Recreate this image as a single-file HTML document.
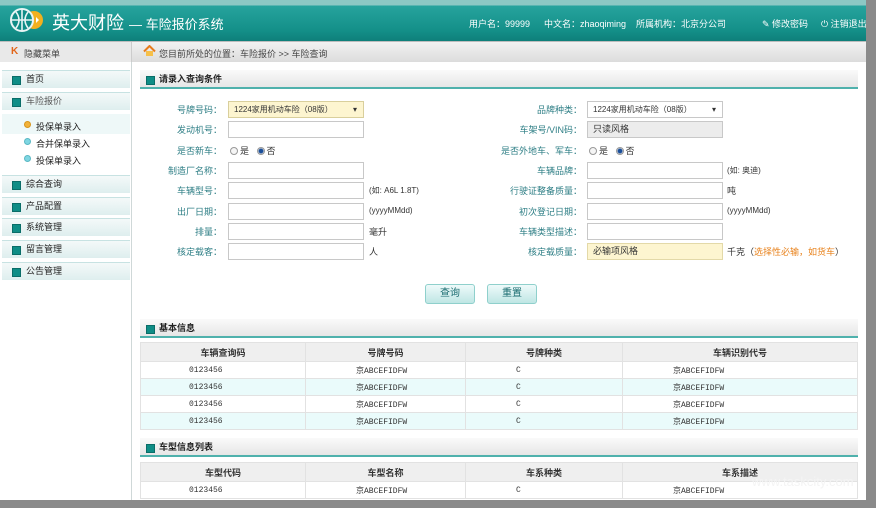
<!DOCTYPE html>
<html><head><meta charset="utf-8"><style>
*{margin:0;padding:0;box-sizing:border-box}
body{width:876px;height:508px;overflow:hidden;background:#fff;font-family:"Liberation Sans","Noto Sans CJK SC",sans-serif;font-size:9px;color:#333;position:relative;white-space:nowrap}
.abs{position:absolute}
#hd{left:0;top:0;width:866px;height:41px;background:linear-gradient(180deg,#8cc8c4 0,#8cc8c4 5px,#26a39d 6px,#149089 30px,#0e7f7a 41px)}
#hd .t{left:52px;top:9px;color:#fff;font-size:18px}
#hd .t small{font-size:13px}
#hd .u{top:17px;color:#fff;font-size:9px}
#sub{left:0;top:41px;width:866px;height:21px;background:linear-gradient(#f2f2f2,#dcdcdc);border-top:1px solid #bdbdbd}
#side{left:0;top:62px;width:132px;height:438px;background:#fff;border-right:1px solid #cfd8d8}
.mi{position:absolute;left:2px;width:128px;height:18px;background:linear-gradient(#f4f9f9,#deeeee);border-top:1px solid #c7e2e2;font-size:9px;line-height:17px;padding-left:24px;color:#222}
.mi:before{content:"";position:absolute;left:10px;top:5px;width:7px;height:7px;background:#0f8d86;border:1px solid #0a6d68}
.sm{position:absolute;left:24px;font-size:9px;color:#222}
.dot{position:absolute;left:24px;width:7px;height:7px;border-radius:50%;background:#7fd6e2;border:1px solid #5ab8c4}
.ph{position:absolute;left:140px;width:718px;height:19px;background:linear-gradient(#fafafa,#e6e6e6);border-bottom:2px solid #4fb1ac;font-weight:bold;font-size:9px;line-height:18px;padding-left:19px;color:#222}
.ph:before{content:"";position:absolute;left:6px;top:6px;width:7px;height:7px;background:#0f8d86;border:1px solid #0a6d68}
.lb{position:absolute;color:#2f7f86;text-align:right;width:140px;font-size:9px}
.in{position:absolute;width:136px;height:17px;border:1px solid #c8c8c8;background:#fff;font-size:8px;line-height:15px;padding-left:5px}
.nt{position:absolute;font-size:8px;color:#333}
table{position:absolute;left:140px;width:718px;border-collapse:collapse;font-size:8px;font-family:"Liberation Mono","Noto Sans CJK SC",monospace}
td,th{border:1px solid #e2e2e2;height:17px}
th{background:#efefef;font-weight:bold;height:19px;font-size:9px;font-family:"Liberation Sans","Noto Sans CJK SC",sans-serif}
td:nth-child(1){padding-left:48px}
td:nth-child(n+2){padding-left:50px}
tr.a td{background:#eafbfb}
.btn{position:absolute;top:284px;width:50px;height:20px;border:1px solid #8fd0cc;border-radius:3px;background:linear-gradient(#eefafa,#bfe6e4);color:#1a6c70;font-size:10px;text-align:center;line-height:18px}
.r{display:inline-block;width:8px;height:8px;border-radius:50%;border:1px solid #999;vertical-align:-1px;margin-right:2px;background:#f5f5f5}
.r.on{background:radial-gradient(#1b4f9a 2px,#eee 3px)}
</style></head><body>
<div id="hd" class="abs">
<svg class="abs" style="left:8px;top:6px" width="38" height="28" viewBox="0 0 38 28"><circle cx="26" cy="14" r="9" fill="#f2b01e"/><circle cx="14" cy="14" r="11" fill="#0f8c86" stroke="#e8f4f4" stroke-width="2"/><path d="M4 14h20M14 3v22M8 6q6 8 0 16M20 6q-6 8 0 16" stroke="#e8f4f4" fill="none" stroke-width="1.6"/><path d="M28 11l3 3-3 3z" fill="#fff"/></svg>
<div class="abs t">英大财险 <small>— 车险报价系统</small></div>
<div class="abs u" style="left:469px">用户名：99999</div>
<div class="abs u" style="left:544px">中文名：zhaoqiming</div>
<div class="abs u" style="left:636px">所属机构：北京分公司</div>
<div class="abs u" style="left:762px">✎ 修改密码</div>
<div class="abs u" style="left:821px">⏻ 注销退出</div>
</div>
<div class="abs" style="left:866px;top:0;width:10px;height:508px;background:#8a8a8a"></div>
<div class="abs" style="left:0;top:500px;width:876px;height:8px;background:#8a8a8a"></div>
<div id="sub" class="abs">
<div class="abs" style="left:0;top:0;width:132px;height:20px;background:#e9e9e9;border-right:1px solid #ccc"></div>
<div class="abs" style="left:11px;top:4px;color:#e2661a;font-weight:bold;font-size:10px">K</div>
<div class="abs" style="left:24px;top:5px;color:#444">隐藏菜单</div>
<svg class="abs" style="left:143px;top:3px" width="13" height="12" viewBox="0 0 13 12"><path d="M1 6.5L6.5 1 12 6.5" stroke="#e87b1c" stroke-width="2" fill="none"/><path d="M3 6v5h7V6" fill="#f6c04a"/></svg>
<div class="abs" style="left:159px;top:5px;color:#444">您目前所处的位置：车险报价 &gt;&gt; 车险查询</div>
</div>
<div id="side" class="abs">
<div class="mi" style="top:8px">首页</div>
<div class="mi" style="top:30px;color:#555">车险报价</div>
<div class="abs" style="left:2px;top:52px;width:128px;height:20px;background:#eef8f8"></div>
<div class="dot" style="top:59px;background:#f2b23a;border-color:#d8951c"></div><div class="sm" style="top:58px;left:36px">投保单录入</div>
<div class="dot" style="top:76px"></div><div class="sm" style="top:75px;left:36px">合并保单录入</div>
<div class="dot" style="top:93px"></div><div class="sm" style="top:92px;left:36px">投保单录入</div>
<div class="mi" style="top:113px">综合查询</div>
<div class="mi" style="top:135px">产品配置</div>
<div class="mi" style="top:156px">系统管理</div>
<div class="mi" style="top:178px">留言管理</div>
<div class="mi" style="top:200px">公告管理</div>
</div>
<div class="ph" style="top:70px">请录入查询条件</div>
<div class="lb" style="left:82px;top:103px">号牌号码：</div><div class="in" style="left:228px;top:101px;background:#fdf5d0;border-color:#d9cf9c">1224家用机动车险（08版）<span style="position:absolute;right:6px">▾</span></div>
<div class="lb" style="left:82px;top:123px">发动机号：</div><div class="in" style="left:228px;top:121px"></div>
<div class="lb" style="left:82px;top:144px">是否新车：</div><div class="nt" style="left:230px;top:144px;font-size:9px"><span class="r"></span>是 &nbsp;&nbsp;<span class="r on"></span>否</div>
<div class="lb" style="left:82px;top:164px">制造厂名称：</div><div class="in" style="left:228px;top:162px"></div>
<div class="lb" style="left:82px;top:184px">车辆型号：</div><div class="in" style="left:228px;top:182px"></div><div class="nt" style="left:369px;top:185px">(如: A6L 1.8T)</div>
<div class="lb" style="left:82px;top:205px">出厂日期：</div><div class="in" style="left:228px;top:203px"></div><div class="nt" style="left:369px;top:206px">(yyyyMMdd)</div>
<div class="lb" style="left:82px;top:225px">排量：</div><div class="in" style="left:228px;top:223px"></div><div class="nt" style="left:369px;top:225px;font-size:9px">毫升</div>
<div class="lb" style="left:82px;top:245px">核定载客：</div><div class="in" style="left:228px;top:243px"></div><div class="nt" style="left:369px;top:245px;font-size:9px">人</div>
<div class="lb" style="left:442px;top:103px">品牌种类：</div><div class="in" style="left:587px;top:101px">1224家用机动车险（08版）<span style="position:absolute;right:6px">▾</span></div>
<div class="lb" style="left:442px;top:123px">车架号/VIN码：</div><div class="in" style="left:587px;top:121px;background:#ececec;font-size:9px">只读风格</div>
<div class="lb" style="left:442px;top:144px">是否外地车、军车：</div><div class="nt" style="left:589px;top:144px;font-size:9px"><span class="r"></span>是 &nbsp;&nbsp;<span class="r on"></span>否</div>
<div class="lb" style="left:442px;top:164px">车辆品牌：</div><div class="in" style="left:587px;top:162px"></div><div class="nt" style="left:727px;top:165px">(如: 奥迪)</div>
<div class="lb" style="left:442px;top:184px">行驶证整备质量：</div><div class="in" style="left:587px;top:182px"></div><div class="nt" style="left:727px;top:184px;font-size:9px">吨</div>
<div class="lb" style="left:442px;top:205px">初次登记日期：</div><div class="in" style="left:587px;top:203px"></div><div class="nt" style="left:727px;top:206px">(yyyyMMdd)</div>
<div class="lb" style="left:442px;top:225px">车辆类型描述：</div><div class="in" style="left:587px;top:223px"></div>
<div class="lb" style="left:442px;top:245px">核定载质量：</div><div class="in" style="left:587px;top:243px;background:#fdf5d0;border-color:#e3d9a8;font-size:9px">必输项风格</div><div class="nt" style="left:727px;top:245px;font-size:9px">千克（<span style="color:#e8821c">选择性必输，如货车</span>）</div>
<div class="btn" style="left:425px">查询</div>
<div class="btn" style="left:487px">重置</div>
<div class="ph" style="top:319px">基本信息</div>
<table style="top:342px">
<tr><th style="width:165px">车辆查询码</th><th style="width:160px">号牌号码</th><th style="width:157px">号牌种类</th><th>车辆识别代号</th></tr>
<tr><td>0123456</td><td>京ABCEFIDFW</td><td>C</td><td>京ABCEFIDFW</td></tr>
<tr class="a"><td>0123456</td><td>京ABCEFIDFW</td><td>C</td><td>京ABCEFIDFW</td></tr>
<tr><td>0123456</td><td>京ABCEFIDFW</td><td>C</td><td>京ABCEFIDFW</td></tr>
<tr class="a"><td>0123456</td><td>京ABCEFIDFW</td><td>C</td><td>京ABCEFIDFW</td></tr>
</table>
<div class="ph" style="top:438px">车型信息列表</div>
<table style="top:462px">
<tr><th style="width:165px">车型代码</th><th style="width:160px">车型名称</th><th style="width:157px">车系种类</th><th>车系描述</th></tr>
<tr><td>0123456</td><td>京ABCEFIDFW</td><td>C</td><td>京ABCEFIDFW</td></tr>
</table>
<div class="abs" style="left:752px;top:474px;color:#f4f4f4;font-size:13px">www.taskcity.com</div>
</body></html>
